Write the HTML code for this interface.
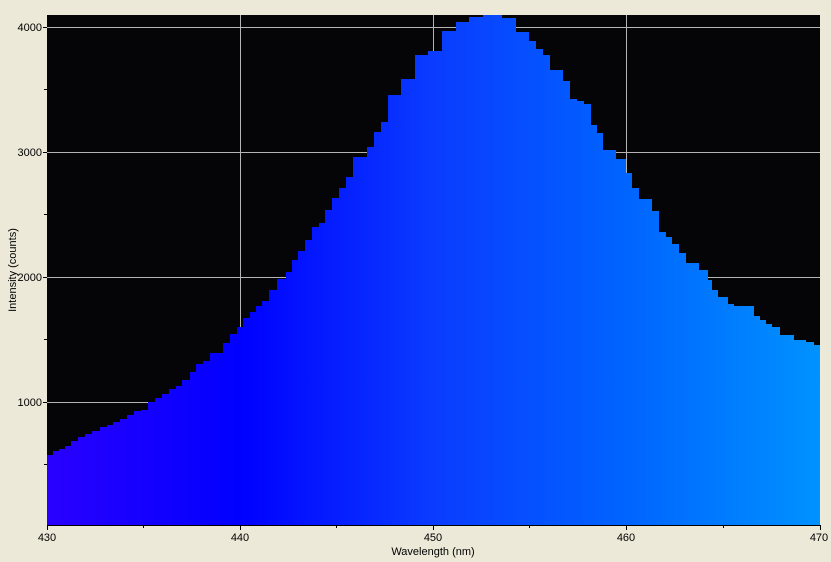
<!DOCTYPE html>
<html><head><style>
html,body{margin:0;padding:0;background:#ece9d8;}
svg{display:block;font-family:"Liberation Sans",sans-serif;}
</style></head><body>
<svg width="831" height="562" viewBox="0 0 831 562" xmlns="http://www.w3.org/2000/svg">
<defs>
<linearGradient id="g" x1="47" y1="0" x2="820" y2="0" gradientUnits="userSpaceOnUse">
<stop offset="0" stop-color="#2a00ff"/>
<stop offset="0.25" stop-color="#0000ff"/>
<stop offset="0.5" stop-color="#0a3cff"/>
<stop offset="0.75" stop-color="#0064ff"/>
<stop offset="1" stop-color="#0092ff"/>
</linearGradient>
</defs>
<rect x="0" y="0" width="831" height="562" fill="#ece9d8"/>
<rect x="47" y="15" width="773" height="510" fill="#050407"/>
<g stroke="#b4b4b4" stroke-width="1">
<line x1="47" y1="27.5" x2="820" y2="27.5"/>
<line x1="47" y1="152.5" x2="820" y2="152.5"/>
<line x1="47" y1="277.5" x2="820" y2="277.5"/>
<line x1="47" y1="402.5" x2="820" y2="402.5"/>
<line x1="240.5" y1="15" x2="240.5" y2="525"/>
<line x1="433.5" y1="15" x2="433.5" y2="525"/>
<line x1="626.5" y1="15" x2="626.5" y2="525"/>
</g>
<path fill="url(#g)" d="M47,525 V455 H53 V451 H59 V449 H65 V446 H71 V441 H78 V437 H85 V434 H92 V431 H100 V427 H107 V425 H113 V422 H120 V419 H127 V415 H134 V411 H141 V410 H148 V402 H155 V398 H162 V394 H169 V389 H176 V386 H182 V380 H190 V372 H196 V364 H203 V361 H210 V353 H223 V343 H230 V334 H237 V327 H243 V318 H250 V312 H256 V306 H262 V301 H269 V290 H277 V279 H286 V272 H292 V260 H298 V251 H305 V240 H312 V227 H319 V223 H325 V210 H332 V198 H339 V188 H346 V177 H353 V157 H367 V147 H374 V132 H381 V122 H388 V95 H401 V79 H415 V55 H428 V51 H442 V31 H456 V22 H469 V17 H483 V15 H502 V18 H516 V32 H529 V41 H536 V49 H543 V55 H550 V70 H563 V81 H570 V99 H577 V101 H584 V104 H591 V125 H597 V133 H603 V150 H616 V159 H626 V173 H632 V188 H639 V199 H652 V211 H659 V232 H666 V237 H672 V244 H679 V253 H686 V263 H699 V270 H708 V280 H712 V290 H718 V297 H728 V304 H734 V306 H754 V316 H760 V320 H766 V324 H772 V327 H780 V335 H794 V340 H806 V342 H814 V345 H820 V525 Z"/>
<g stroke="#000" stroke-width="1">
<line x1="47" y1="525.5" x2="821" y2="525.5"/>
<line x1="47.5" y1="525" x2="47.5" y2="530"/>
<line x1="143.5" y1="525" x2="143.5" y2="528"/>
<line x1="240.5" y1="525" x2="240.5" y2="530"/>
<line x1="336.5" y1="525" x2="336.5" y2="528"/>
<line x1="433.5" y1="525" x2="433.5" y2="530"/>
<line x1="529.5" y1="525" x2="529.5" y2="528"/>
<line x1="626.5" y1="525" x2="626.5" y2="530"/>
<line x1="723.5" y1="525" x2="723.5" y2="528"/>
<line x1="820.5" y1="525" x2="820.5" y2="530"/>
<line x1="43" y1="27.5" x2="47" y2="27.5"/>
<line x1="44" y1="89.5" x2="47" y2="89.5"/>
<line x1="43" y1="152.5" x2="47" y2="152.5"/>
<line x1="44" y1="214.5" x2="47" y2="214.5"/>
<line x1="43" y1="277.5" x2="47" y2="277.5"/>
<line x1="44" y1="339.5" x2="47" y2="339.5"/>
<line x1="43" y1="402.5" x2="47" y2="402.5"/>
<line x1="44" y1="464.5" x2="47" y2="464.5"/>
</g>
<g font-size="11" fill="#000">
<text x="42" y="31" text-anchor="end">4000</text>
<text x="42" y="156" text-anchor="end">3000</text>
<text x="42" y="281" text-anchor="end">2000</text>
<text x="42" y="406" text-anchor="end">1000</text>
<text x="47" y="541" text-anchor="middle">430</text>
<text x="240" y="541" text-anchor="middle">440</text>
<text x="433" y="541" text-anchor="middle">450</text>
<text x="626" y="541" text-anchor="middle">460</text>
<text x="819" y="541" text-anchor="middle">470</text>
<text x="433" y="555" text-anchor="middle">Wavelength (nm)</text>
<text transform="translate(16,270) rotate(-90)" text-anchor="middle">Intensity (counts)</text>
</g>
</svg>
</body></html>
